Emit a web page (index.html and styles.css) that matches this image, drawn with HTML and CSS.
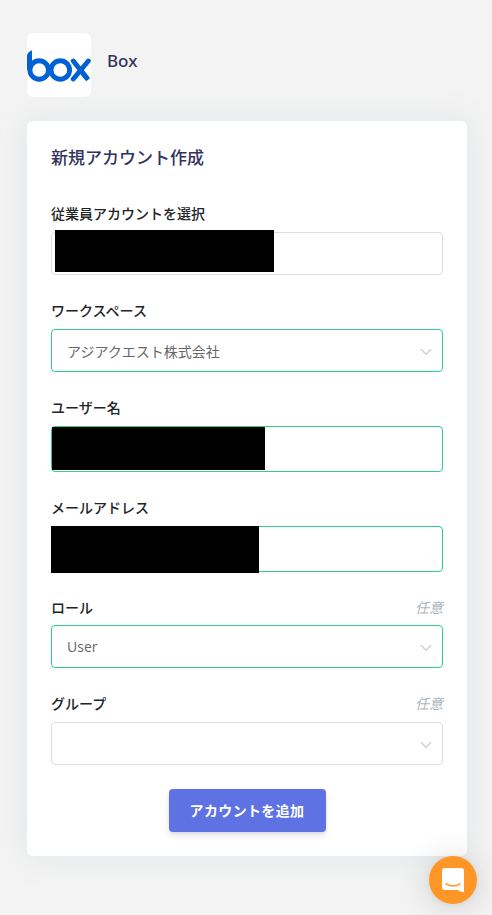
FILE: index.html
```html
<!DOCTYPE html>
<html lang="ja">
<head>
  <meta charset="UTF-8">
  <meta name="viewport" content="width=device-width, initial-scale=1.0">
  <title>新規アカウント作成</title>
  <link rel="stylesheet" href="styles.css">
</head>
<body>
  <header class="app-header">
    <div class="app-logo">
      <svg width="64" height="64" viewBox="0 0 64 64" fill="none" stroke="#0061d5" stroke-width="4.9" stroke-linecap="round" stroke-linejoin="round">
        <path d="M0 37V22.5Q0.5 19 5 17.3V28L3 37Z" fill="#0061d5" stroke="none"/>
        <circle cx="12.2" cy="37" r="9.3"/>
        <circle cx="33.3" cy="37" r="9.3"/>
        <path d="M46.3 28L59.3 44.6M61.3 28L46.3 46"/>
        <path d="M55 39L59.6 44.8" stroke-linecap="square"/>
      </svg>
    </div>
    <h1 class="app-name">Box</h1>
  </header>

  <main class="card">
    <h2 class="card-title">新規アカウント作成</h2>
    <form class="form">
      <div class="field">
        <div class="field-head"><label>従業員アカウントを選択</label></div>
        <div class="control">
          <span class="mask mask-employee"></span>
        </div>
      </div>
      <div class="field">
        <div class="field-head"><label>ワークスペース</label></div>
        <div class="control valid">
          <span>アジアクエスト株式会社</span>
          <svg class="chevron" width="12" height="8" viewBox="0 0 12 8"><path d="M1 1.2L6 6.2L11 1.2"/></svg>
        </div>
      </div>
      <div class="field">
        <div class="field-head"><label>ユーザー名</label></div>
        <div class="control text valid">
          <span class="mask mask-user"></span>
        </div>
      </div>
      <div class="field">
        <div class="field-head"><label>メールアドレス</label></div>
        <div class="control text valid">
          <span class="mask mask-mail"></span>
        </div>
      </div>
      <div class="field role">
        <div class="field-head"><label>ロール</label><em>任意</em></div>
        <div class="control valid">
          <span>User</span>
          <svg class="chevron" width="12" height="8" viewBox="0 0 12 8"><path d="M1 1.2L6 6.2L11 1.2"/></svg>
        </div>
      </div>
      <div class="field">
        <div class="field-head"><label>グループ</label><em>任意</em></div>
        <div class="control">
          <svg class="chevron" width="12" height="8" viewBox="0 0 12 8"><path d="M1 1.2L6 6.2L11 1.2"/></svg>
        </div>
      </div>
      <button type="button" class="submit">アカウントを追加</button>
    </form>
  </main>

  <div class="chat">
    <svg width="22" height="25" viewBox="0 0 22 25">
      <path d="M3 0H19Q22 0 22 3V24.5Q18.5 23.7 15.5 22H3Q0 22 0 19V3Q0 0 3 0Z" fill="#fff"/>
      <path d="M4 15.8Q11 20.2 18 15.8" fill="none" stroke="#ff9626" stroke-width="1.4" stroke-linecap="round"/>
    </svg>
  </div>
</body>
</html>
```

FILE: styles.css
```css
:root {
  --navy: #32325d;
  --text: #212529;
  --green: #2dce89;
  --border: #dcdde6;
  --indigo: #5e72e4;
  --orange: #ff9626;
}
* { box-sizing: border-box; }
body {
  margin: 0;
  height: 915px;
  padding: 33px 25px 0 27px;
  overflow: hidden;
  background-color: #f3f3f3;
  color: var(--text);
  font-family: "Open Sans", "Noto Sans CJK JP", sans-serif;
  font-size: 14px;
}
.app-header { display: flex; gap: 16px; height: 64px; margin-bottom: 24px; }
.app-logo { width: 64px; height: 64px; background: #fff; border-radius: 6px; overflow: hidden; }
.app-logo svg { display: block; }
.app-name { margin: 15px 0 0; font-family: "Noto Sans", sans-serif; font-size: 17px; line-height: 25px; font-weight: 500; color: var(--navy); }
.card {
  height: 735px;
  padding: 24px;
  background: #fff;
  border-radius: 6px;
  box-shadow: 0 0 32px rgba(136, 152, 170, 0.15);
}
.card-title { margin: 0 0 32px; font-size: 17px; line-height: 25px; font-weight: 500; color: var(--navy); }
.form { display: flex; flex-direction: column; gap: 24px; }
.field-head { display: flex; justify-content: space-between; height: 22px; margin-bottom: 8px; line-height: 23px; }
.field-head label { font-weight: 500; }
.field-head em { color: #adb5bd; }
.role .field-head { height: 21px; }
.control {
  position: relative;
  display: flex;
  align-items: center;
  height: 43px;
  padding: 0 10px 0 15px;
  border: 1px solid var(--border);
  border-radius: 4px;
  color: #666;
}
.control.text { height: 46px; }
.control.valid { border-color: var(--green); }
.chevron { margin: 2px 0 0 auto; fill: none; stroke: #ced0d8; stroke-width: 1.5; }
/* blacked-out values, drawn over the field borders */
.mask { position: absolute; background: #000; }
.mask-employee { left: 3px; top: -3px; width: 219px; height: 42px; }
.mask-user { left: 0; top: 0; width: 213px; height: 43px; }
.mask-mail { left: -1px; top: -1px; width: 208px; height: 47px; }
.submit {
  align-self: center;
  width: 157px;
  height: 43px;
  padding: 0 0 2px;
  border: 0;
  border-radius: 4px;
  background: var(--indigo);
  color: #fff;
  font: bold 14px "Open Sans", "Noto Sans CJK JP", sans-serif;
  letter-spacing: 0.35px;
  box-shadow: 0 4px 6px rgba(50, 50, 93, 0.11), 0 1px 3px rgba(0, 0, 0, 0.08);
}
.chat {
  position: fixed;
  right: 15px;
  bottom: 11px;
  display: flex;
  align-items: center;
  justify-content: center;
  width: 48px;
  height: 48px;
  border-radius: 50%;
  background: var(--orange);
  box-shadow: 0 1px 6px rgba(0, 0, 0, 0.06), 0 2px 32px rgba(0, 0, 0, 0.16);
}
```
